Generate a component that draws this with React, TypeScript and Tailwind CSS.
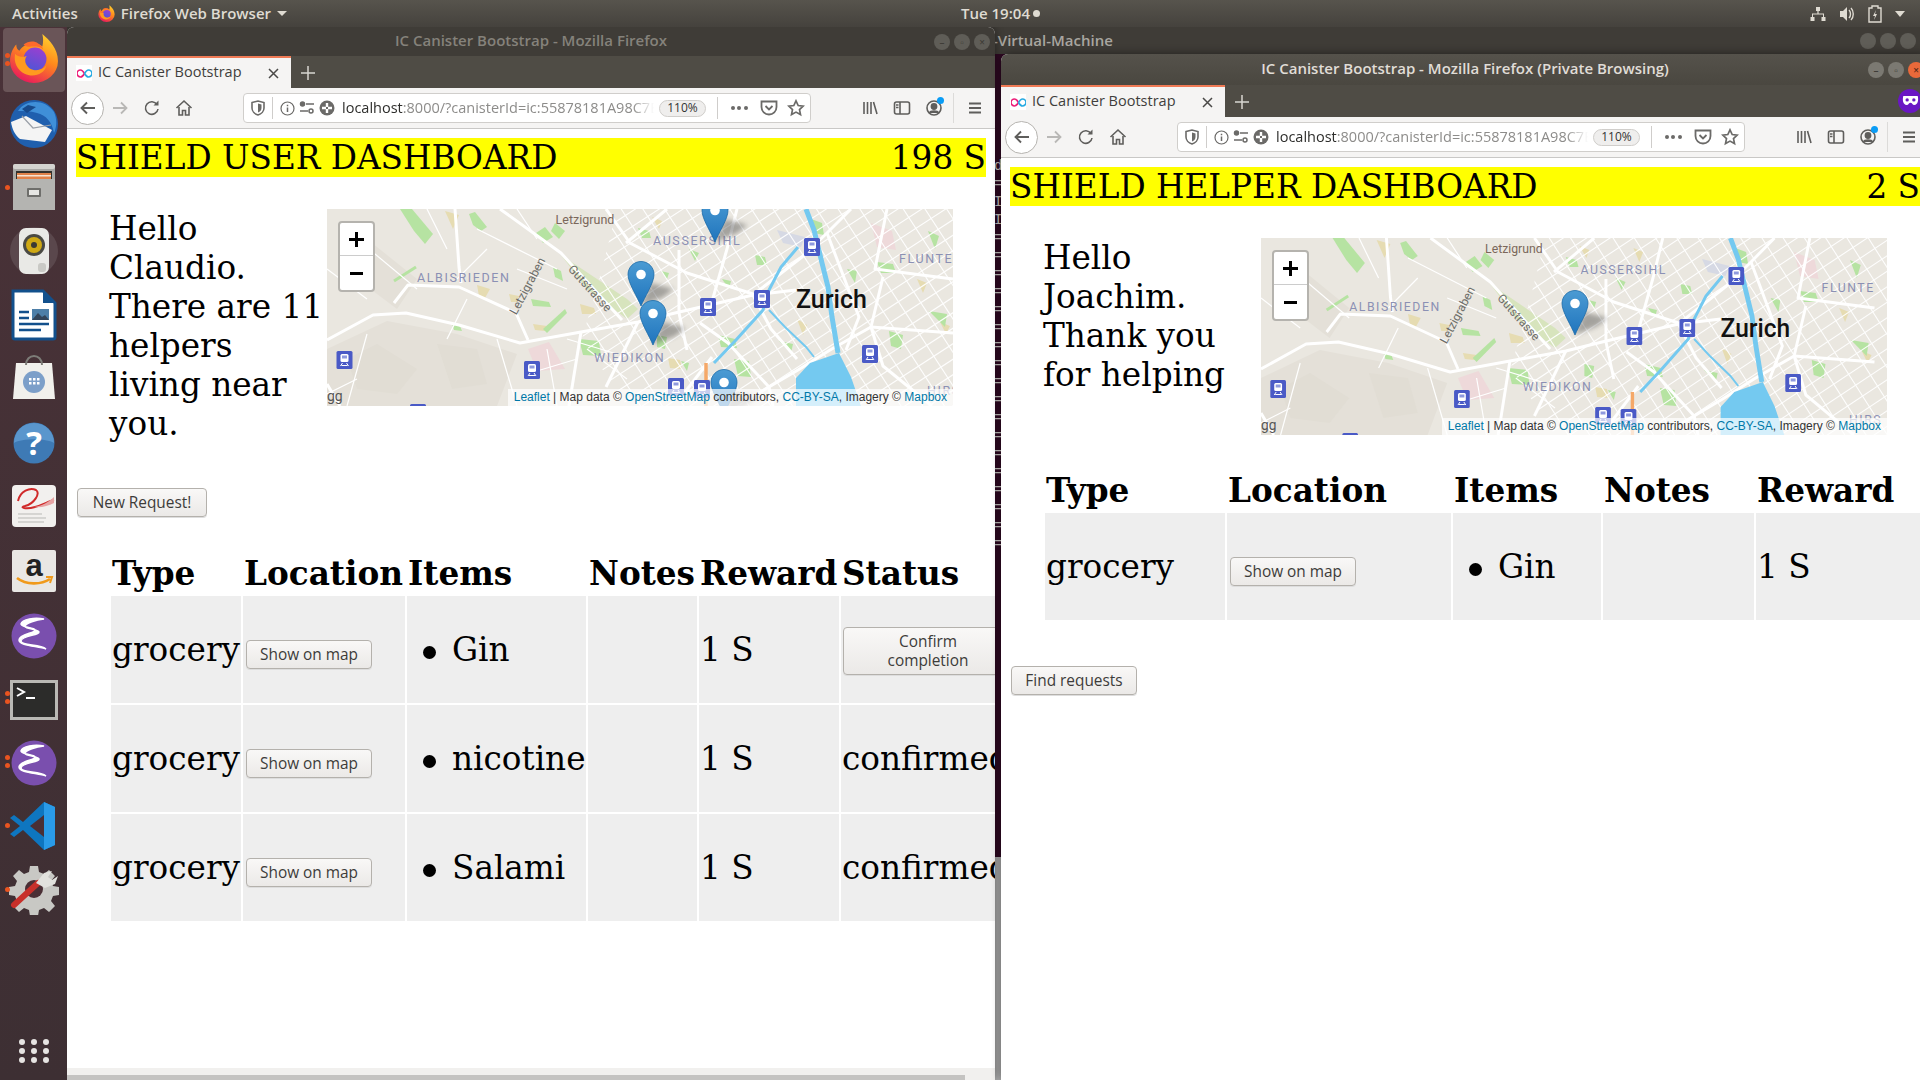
import type { ReactNode } from "react";

const UI = "font-['Open_Sans','Noto_Sans',sans-serif]";

function FirefoxIcon({ size }: { size: number }) {
  return (
    <svg width={size} height={size} viewBox="0 0 48 48">
      <defs>
        <linearGradient id="ffOuter" x1="0.8" y1="0" x2="0.3" y2="1">
          <stop offset="0" stopColor="#ffd22e" />
          <stop offset="0.45" stopColor="#ff8a1c" />
          <stop offset="1" stopColor="#e8175d" />
        </linearGradient>
        <linearGradient id="ffGlobe" x1="0.7" y1="0" x2="0.3" y2="1">
          <stop offset="0" stopColor="#9a3fd0" />
          <stop offset="1" stopColor="#4f55d6" />
        </linearGradient>
      </defs>
      <path d="M32 1c7 6 15 14 15 26a23 21 0 0 1-46 0c0-7 3-13 6-16 0 3 1 5 3 6 3-5 8-7 13-7 4 0 7 1 9 3 1-4 1-8 0-12z" fill="url(#ffOuter)" />
      <circle cx="25" cy="25" r="11" fill="url(#ffGlobe)" />
      <path d="M6 20c3 4 8 3 11 2-3 4-1 9 3 12 5 3 12 2 16-3-2 9-13 12-21 8C8 36 4 28 6 20z" fill="#ff9a1f" />
      <path d="M14 11c4-3 10-4 14-1 2 1 4 3 5 6-3-3-6-3-9-3-4 0-7 1-10-2z" fill="#ff6a2b" />
    </svg>
  );
}

function DockIcon({ children }: { children: ReactNode }) {
  return <svg width="52" height="52" viewBox="0 0 52 52">{children}</svg>;
}

const EmacsIcon = () => (
  <DockIcon>
    <circle cx="26" cy="26" r="22.5" fill="#7a4fae" />
    <path d="M36 9c-8 1-18 4-19 7s13 3 14 6-18 4-18 9 19 3 25 8c-8-3-27-3-27-9 0-6 17-7 16-10s-13-2-14-6C14 9 27 7 36 9z" fill="#fff" stroke="#fff" strokeWidth="1.5" />
  </DockIcon>
);

const dockIcons: { key: string; dots: number; nudge?: string; icon: ReactNode }[] = [
  {
    key: "firefox",
    dots: 2,
    nudge: "pb-[4px]",
    icon: <FirefoxIcon size={50} />,
  },
  {
    key: "thunderbird",
    dots: 0,
    icon: (
      <DockIcon>
        <circle cx="26" cy="26" r="24" fill="#1f5fae" />
        <path d="M10 13C17 2 36 0 46 14c3 7 3 14 0 21-2-11-8-18-17-20-7-2-13-2-19-2z" fill="#3f8fd8" />
        <path d="M3 24l15-6 26 14-7 12-25-3c-5-4-8-10-9-17z" fill="#f4f4f4" />
        <path d="M14 18l11 12 18-3" fill="none" stroke="#9aa0a8" strokeWidth="1.2" />
        <path d="M14 11l6-4 8 2-9 6z" fill="#174a8c" />
      </DockIcon>
    ),
  },
  {
    key: "files",
    dots: 1,
    icon: (
      <DockIcon>
        <rect x="5" y="3" width="42" height="46" rx="3" fill="#a9a9a6" />
        <rect x="5" y="3" width="42" height="5" rx="2" fill="#d4d4d0" />
        <rect x="8" y="10" width="36" height="8" fill="#33312d" />
        <rect x="9" y="12" width="34" height="6" fill="#e0824a" />
        <rect x="9" y="14" width="34" height="1.5" fill="#f5e3d4" />
        <rect x="5" y="18" width="42" height="31" fill="#b4b4b1" />
        <rect x="19" y="27" width="14" height="9" rx="1" fill="#6e6e6b" />
        <rect x="21" y="29" width="10" height="5" fill="#e6e6e3" />
      </DockIcon>
    ),
  },
  {
    key: "rhythmbox",
    dots: 0,
    icon: (
      <DockIcon>
        <circle cx="26" cy="26" r="24" fill="#5a474c" />
        <rect x="11" y="3" width="30" height="46" rx="7" fill="#e9e9e6" />
        <circle cx="26" cy="20" r="11" fill="#4a4a44" />
        <circle cx="26" cy="20" r="8" fill="#cfa915" />
        <circle cx="26" cy="20" r="3" fill="#3a3a34" />
        <rect x="30" y="38" width="8" height="9" rx="3" fill="#c9c9c5" />
      </DockIcon>
    ),
  },
  {
    key: "writer",
    dots: 0,
    icon: (
      <DockIcon>
        <path d="M5 2h30l12 12v34a2 2 0 0 1-2 2H7a2 2 0 0 1-2-2z" fill="#fff" stroke="#12508c" strokeWidth="3" />
        <path d="M35 2l12 12H35z" fill="#12508c" />
        <path d="M11 23h10M11 29h10M11 35h30M11 41h22" stroke="#12508c" strokeWidth="2.4" />
        <rect x="24" y="20" width="17" height="11" fill="#4d7fa8" />
        <path d="M24 31l6-7 4 4 3-2 4 5z" fill="#33455a" />
      </DockIcon>
    ),
  },
  {
    key: "software",
    dots: 0,
    nudge: "pb-[4px]",
    icon: (
      <DockIcon>
        <path d="M8 12h36l3 36H5z" fill="#f1f0ec" />
        <path d="M18 14c0-12 16-12 16 0" fill="none" stroke="#7d7d78" strokeWidth="2" />
        <ellipse cx="26" cy="31" rx="11" ry="11" fill="#7c9fc9" />
        <path d="M21 27h2.5v2.5H21zM25 27h2.5v2.5H25zM29 27h2.5v2.5H29zM21 31h2.5v2.5H21zM25 31h2.5v2.5H25zM29 31h2.5v2.5H29z" fill="#fff" />
      </DockIcon>
    ),
  },
  {
    key: "help",
    dots: 0,
    icon: (
      <DockIcon>
        <circle cx="26" cy="26" r="20.5" fill="#3e7ab5" />
        <path d="M6 26a20 20 0 0 1 40 0c-8-5-32-5-40 0z" fill="#5a96cd" />
        <text x="26" y="38" textAnchor="middle" fontSize="33" fontWeight="700" fill="#fff" fontFamily="Open Sans">?</text>
      </DockIcon>
    ),
  },
  {
    key: "evince",
    dots: 0,
    icon: (
      <DockIcon>
        <rect x="4" y="5" width="44" height="42" rx="4" fill="#f2f0ee" />
        <path d="M10 21c2-10 12-14 18-11 5 3-2 14-11 16-6 1 0 4 10 1 8-2 14-6 19-7" fill="none" stroke="#d02a2a" strokeWidth="2" />
        <path d="M26 27c8-1 15-5 20-10v6c-6 3-13 5-20 4z" fill="#e7a4a4" />
        <path d="M10 34h24M10 38h28M10 42h26" stroke="#b9b9b6" strokeWidth="1" />
      </DockIcon>
    ),
  },
  {
    key: "amazon",
    dots: 0,
    nudge: "pt-[2px]",
    icon: (
      <DockIcon>
        <rect x="4" y="5" width="44" height="42" rx="2" fill="#e9e7e4" />
        <text x="26" y="31" textAnchor="middle" fontSize="31" fontWeight="700" fill="#222" fontFamily="Liberation Sans">a</text>
        <path d="M9 33c9 7 24 7 33 1" fill="none" stroke="#f09a1c" strokeWidth="2.6" />
        <path d="M38 32l6 0-2 6" fill="none" stroke="#f09a1c" strokeWidth="2" />
      </DockIcon>
    ),
  },
  { key: "emacs1", dots: 0, nudge: "pt-[3px]", icon: <EmacsIcon /> },
  {
    key: "terminal",
    dots: 2,
    nudge: "pt-[4px]",
    icon: (
      <DockIcon>
        <rect x="2" y="6" width="48" height="40" fill="#b9b9b4" />
        <rect x="5" y="9" width="42" height="34" fill="#2c2c2a" />
        <path d="M9 14l7 4-7 4" fill="none" stroke="#fff" strokeWidth="2" />
        <path d="M18 24h9" stroke="#fff" strokeWidth="2" />
      </DockIcon>
    ),
  },
  { key: "emacs2", dots: 2, nudge: "pt-[2px]", icon: <EmacsIcon /> },
  {
    key: "vscode",
    dots: 1,
    nudge: "pt-[2px]",
    icon: (
      <DockIcon>
        <path d="M36 2l11 5v38l-11 5-21-20-9 7-4-3 10-8L2 18l4-3 9 7z" fill="#0e76c0" />
        <path d="M36 2l11 5v38l-11 5z" fill="#2a9be8" />
        <path d="M36 15v22l-14-11z" fill="#4a2f35" />
      </DockIcon>
    ),
  },
  {
    key: "tools",
    dots: 1,
    icon: (
      <DockIcon>
        <path d="M22 3h8l1 6 5 2 5-4 6 6-4 5 2 5 6 1v8l-6 1-2 5 4 5-6 6-5-4-5 2-1 6h-8l-1-6-5-2-5 4-6-6 4-5-2-5-6-1v-8l6-1 2-5-4-5 6-6 5 4 5-2z" fill="#c8c8c4" />
        <circle cx="26" cy="26" r="9" fill="#4a2f35" />
        <path d="M6 42l24-22" stroke="#c8302a" strokeWidth="6" strokeLinecap="round" />
        <path d="M28 20l8-10 8-2-4 6 4 3 6-4-3 8-10 4z" fill="#e2e2de" />
      </DockIcon>
    ),
  },
];

function Dock() {
  return (
    <div className="flex w-[67px] shrink-0 flex-col items-center bg-gradient-to-b from-[#4a3238] to-[#3d2f33] pt-px">
      <div className="flex flex-col">
        {dockIcons.map((item, i) => (
          <div
            key={item.key}
            className={`relative flex h-[63.8px] w-[62px] items-center justify-center rounded-[4px] ${i === 0 ? "bg-[#6a5558]" : ""} ${item.nudge ?? ""}`}
          >
            {item.dots > 0 && (
              <div className="absolute left-[2px] top-0 flex h-full flex-col justify-center gap-[3px]">
                {Array.from({ length: item.dots }).map((_, d) => (
                  <span key={d} className="h-[5px] w-[5px] rounded-full bg-[#e95420]" />
                ))}
              </div>
            )}
            {item.icon}
          </div>
        ))}
      </div>
      <div className="mt-auto mb-[17px] grid grid-cols-3 gap-x-[6px] gap-y-[3px]">
        {Array.from({ length: 9 }).map((_, i) => (
          <span key={i} className="h-[6px] w-[6px] rounded-full bg-[#e6e4e2]" />
        ))}
      </div>
    </div>
  );
}

function TopBar() {
  return (
    <div className={`relative flex h-[27px] shrink-0 items-center bg-gradient-to-b from-[#57544d] to-[#45423d] text-[15px] font-semibold text-[#dfdbd2] ${UI}`}>
      <span className="ml-[12px]">Activities</span>
      <span className="ml-[20px]"><FirefoxIcon size={17} /></span>
      <span className="ml-[6px]">Firefox Web Browser</span>
      <span className="ml-[6px] h-0 w-0 border-x-[5px] border-t-[5px] border-x-transparent border-t-[#dfdbd2]" />
      <span className="absolute left-[961px]">Tue 19:04</span>
      <span className="absolute left-[1033px] h-[7px] w-[7px] rounded-full bg-[#dfdbd2]" />
      <div className="ml-auto mr-[15px] flex items-center gap-[13px]">
        <svg width="16" height="16" viewBox="0 0 16 16" fill="#dfdbd2"><path d="M6 1h4v4H8.6v2.4H14V11h1.5v4h-4v-4H13V8.6H3V11h1.5v4h-4v-4H2V7.4h5.4V5H6z" /></svg>
        <svg width="16" height="16" viewBox="0 0 16 16" fill="#dfdbd2"><path d="M1 5h3l4-4v14l-4-4H1z" /><path d="M10 4c2 2 2 6 0 8M12 2c3 3 3 9 0 12" fill="none" stroke="#dfdbd2" strokeWidth="1.4" /></svg>
        <svg width="14" height="18" viewBox="0 0 14 18"><path d="M4 1h6v2h3v14H1V3h3z" fill="none" stroke="#dfdbd2" strokeWidth="1.4" /><path d="M8 5l-3 6h2l-1 4 3-6H7z" fill="#dfdbd2" /></svg>
        <span className="h-0 w-0 border-x-[5px] border-t-[6px] border-x-transparent border-t-[#dfdbd2]" />
      </div>
    </div>
  );
}

function ToolIcon({ children }: { children: ReactNode }) {
  return (
    <svg width="18" height="18" viewBox="0 0 18 18" fill="none" stroke="#5f5e5c" strokeWidth="1.6">
      {children}
    </svg>
  );
}

function UrlBar() {
  return (
    <div className={`ml-[43px] mr-[43px] flex h-[30px] w-[568px] shrink-0 items-center rounded-[4px] border border-[#d0cecb] bg-white ${UI}`}>
      <div className="flex w-[28px] justify-center">
        <svg width="14" height="16" viewBox="0 0 14 16"><path d="M1 2.5 7 1l6 1.5V8c0 3-2.5 6-6 7-3.5-1-6-4-6-7z" fill="none" stroke="#6b6a68" strokeWidth="1.6" /><path d="M7 3.500l3.500 1V8c0 2-1.300 3.600-3.500 4.400z" fill="#6b6a68" /></svg>
      </div>
      <div className="h-[22px] w-px bg-[#cfcdcb]" />
      <div className="ml-[4px] flex w-[20px] justify-center">
        <svg width="15" height="15" viewBox="0 0 15 15" fill="none" stroke="#6b6a68" strokeWidth="1.2"><circle cx="7.5" cy="7.5" r="6.5" /><path d="M7.5 6.5V11M7.5 3.8v1.4" strokeWidth="1.5" /></svg>
      </div>
      <div className="flex w-[20px] justify-center">
        <svg width="16" height="14" viewBox="0 0 16 14" fill="none" stroke="#6b6a68" strokeWidth="1.5"><circle cx="3.5" cy="3" r="2" fill="#6b6a68" /><path d="M7 3h8M1 10h8" /><circle cx="12" cy="10" r="2" /></svg>
      </div>
      <div className="flex w-[20px] justify-center">
        <svg width="16" height="16" viewBox="0 0 16 16"><circle cx="8" cy="8" r="7.5" fill="#6b6a68" /><path d="M8 3v4M8 9v4M3 8h4M9 8h4" stroke="#fff" strokeWidth="2.4" /></svg>
      </div>
      <div className="ml-[5px] w-[312px] overflow-hidden whitespace-nowrap text-[14.5px] text-[#8d8c8a] [mask-image:linear-gradient(to_right,black_93%,transparent)]">
        <span className="text-[#2e2e2c]">localhost</span>:8000/?canisterId=ic:55878181A98C7EA
      </div>
      <div className="ml-[5px] flex h-[17px] w-[47px] shrink-0 items-center justify-center rounded-full border border-[#d0cecb] bg-[#efeeed] text-[12px] text-[#333]">110%</div>
      <div className="ml-[11px] h-[22px] w-px bg-[#cfcdcb]" />
      <div className="flex w-[42px] justify-center gap-[2.5px]">
        <span className="h-[4px] w-[4px] rounded-full bg-[#6b6a68]" />
        <span className="h-[4px] w-[4px] rounded-full bg-[#6b6a68]" />
        <span className="h-[4px] w-[4px] rounded-full bg-[#6b6a68]" />
      </div>
      <svg width="18" height="16" viewBox="0 0 18 16" fill="none" stroke="#6b6a68" strokeWidth="1.8"><path d="M1.5 1.5h15V7a7.5 7.5 0 0 1-15 0z" /><path d="M5.5 6 9 9.5 12.500 6" /></svg>
      <svg className="ml-[9px]" width="18" height="18" viewBox="0 0 18 18" fill="none" stroke="#6b6a68" strokeWidth="1.7"><path d="M9 1.800l2.200 4.700 5 .6-3.700 3.500 1 5L9 13.100 4.500 15.600l1-5L1.800 7.100l5-.6z" /></svg>
    </div>
  );
}

function Toolbar() {
  return (
    <div className="flex h-[41px] shrink-0 items-center border-b border-[#c9c8c6] bg-[#f5f4f3]">
      <div className="ml-[4px] flex h-[33px] w-[33px] items-center justify-center rounded-full border border-[#b5b3af] bg-white">
        <ToolIcon><path d="M16 9H3M8 3.500 2.500 9 8 14.500" strokeWidth="1.9" /></ToolIcon>
      </div>
      <div className="flex w-[32px] justify-center">
        <svg width="18" height="18" viewBox="0 0 18 18" fill="none" stroke="#b9b8b6" strokeWidth="1.8"><path d="M2 9h13M10 3.500 15.500 9 10 14.500" /></svg>
      </div>
      <div className="flex w-[32px] justify-center">
        <ToolIcon><path d="M14 5.500A6.300 6.300 0 1 0 15 10" /><path d="M15.500 1.500V6.500H10.500z" fill="#5f5e5c" stroke="none" /></ToolIcon>
      </div>
      <div className="flex w-[32px] justify-center">
        <ToolIcon><path d="M1.500 9 9 2l7.500 7" /><path d="M4 8v8h3.500v-4.500h3V16H14V8" /></ToolIcon>
      </div>
      <UrlBar />
      <div className="flex w-[32px] justify-center">
        <ToolIcon><path d="M3 3v12M6.500 3v12M10 3v12M12.500 3l3.500 12" /></ToolIcon>
      </div>
      <div className="flex w-[32px] justify-center">
        <ToolIcon><rect x="1.500" y="3" width="15" height="12" rx="2" /><path d="M7 3v12M3 6h2.500M3 8.500h2.500" /></ToolIcon>
      </div>
      <div className="relative flex w-[32px] justify-center">
        <ToolIcon><circle cx="9" cy="9" r="7" /><circle cx="9" cy="7.500" r="2.600" fill="#5f5e5c" /><path d="M4.500 14c1-2.500 8-2.500 9 0" fill="#5f5e5c" /></ToolIcon>
        <span className="absolute left-[19px] top-[-2px] h-[7px] w-[7px] rounded-full bg-[#0a9cf5]" />
      </div>
      <div className="ml-[3px] h-[30px] w-px bg-[#dcdbd9]" />
      <div className="ml-[5px] flex w-[32px] justify-center">
        <ToolIcon><path d="M3 4.500h12M3 9h12M3 13.500h12" strokeWidth="1.9" /></ToolIcon>
      </div>
    </div>
  );
}

function MetroPin({ x, y }: { x: number; y: number }) {
  return (
    <g transform={`translate(${x - 8} ${y - 9})`}>
      <rect width="16" height="18" rx="1.500" fill="#4a5ac6" />
      <rect x="4" y="3" width="8" height="8" rx="1.500" fill="#fff" />
      <rect x="5.500" y="4.500" width="5" height="3" fill="#8f9ade" />
      <path d="M4 15l2-3M12 15l-2-3M5 14.500h6" stroke="#fff" strokeWidth="1" />
    </g>
  );
}

function Marker({ x, y }: { x: number; y: number }) {
  return (
    <g transform={`translate(${x - 13.500} ${y - 45})`}>
      <path d="M13 45 L23 22 L46 28 L36 36 Z" fill="#3a3a3a" opacity="0.4" filter="url(#mapBlur)" />
      <path d="M13.500.5C6.300.5.500 6.300.500 13.500.500 22 10 36 13.500 45 17 36 26.500 22 26.500 13.500 26.500 6.300 20.700.5 13.500.5z" fill="url(#pinFill)" stroke="#1c6ba8" strokeWidth="0.8" />
      <circle cx="13.500" cy="13.500" r="4.800" fill="#fff" />
    </g>
  );
}

const greens = [
  "73,0 85,0 106,25 98,35 87,22",
  "142,5 148,3 160,18 154,22 146,16",
  "209,24 218,18 226,28 216,34",
  "228,14 238,22 232,30 224,22",
  "311,19 322,22 324,29 315,29",
  "428,46 438,48 440,56 430,56",
  "484,10 495,14 497,26 487,24",
  "550,53 566,55 569,64 554,64",
  "226,58 234,62 236,72 228,68",
  "204,90 222,93 224,98 206,97",
  "216,120 238,100 240,104 220,124",
  "252,130 272,132 274,147 256,146",
  "125,115 133,117 135,122 127,121",
  "391,126 408,130 410,139 394,138",
  "407,150 422,152 424,168 411,167",
  "334,62 342,64 340,70",
  "452,132 466,135 464,144",
  "562,122 576,126 574,140 564,137",
  "601,22 612,27 608,40",
  "602,102 620,105 618,118",
  "354,152 362,154 360,162",
  "330,126 340,128 338,140 330,138",
  "395,70 404,72 402,80",
  "362,40 372,44 368,52",
  "520,60 530,62 528,74",
];

const sands = [
  "150,76 163,80 158,89 152,87",
  "182,85 192,87 190,93 184,93",
  "253,95 267,99 269,105 255,105",
  "341,149 353,151 355,160 343,159",
  "206,115 220,117 218,122 208,121",
  "613,113 623,117 619,125",
  "118,2 132,6 126,20",
  "470,110 480,116 476,126",
  "380,10 390,14 386,24",
  "325,8 335,12 332,20",
  "590,70 600,74 596,84",
];

const roads = [
  "173,0 205,23 234,44 295,111",
  "0,131 46,106 79,104 132,116 193,134 254,123 311,113 348,104 426,86 469,81",
  "67,94 81,76 132,78 189,104 201,131",
  "279,0 303,34 360,64 426,85",
  "128,0 132,58 134,74",
  "299,34 340,0",
  "426,86 475,48 500,24 524,0",
  "373,114 401,134 442,178 446,197",
  "385,148 352,191",
  "544,118 503,141 471,161 430,185",
  "556,68 544,118 556,157 605,197",
  "626,124 544,118",
  "500,24 532,108 519,141",
  "254,123 242,197",
  "311,113 279,178",
  "352,41 352,104 360,141",
  "0,175 13,197",
  "426,86 444,120 470,150",
  "560,0 548,60 626,70",
  "410,0 400,40 384,96",
];

const lanes = [
  "150,20 230,60", "190,60 240,80", "30,30 90,80", "0,60 40,90", "140,90 120,130",
  "170,130 190,197", "220,140 230,197", "200,165 250,150", "260,140 300,170", "210,30 190,0",
  "100,0 120,40", "160,40 130,70", "240,130 290,145", "0,185 30,170", "40,125 20,197",
];

// street grid of the built-up part of the city
const gridLines = Array.from({ length: 46 }, (_, i) => i * 13 - 100);

function MapBase() {
  return (
    <>
      <rect width="640" height="197" fill="#eae7e0" />
      <path d="M0 140 60 112 130 125 190 145 170 197H0zM40 30 90 70 70 100 30 70z" fill="#e4e0d8" />
      <path d="M20 150 50 135 90 160 70 185 30 180zM110 135 150 140 160 175 125 180z" fill="#e1ddd4" />
      <path d="M234 46 300 90 311 100 300 110 260 80z" fill="#d7e4bd" />
      <path d="M201 140 222 133 238 160 210 162z" fill="#eed9da" />
      <path d="M544 14 565 22 569 41 550 38z" fill="#eed9da" />
      <path d="M450 21 478 28 474 38 456 34z" fill="#d6d9e4" />
      {sands.map((p) => <polygon key={p} points={p} fill="#e6dcb2" />)}
      {greens.map((p) => <polygon key={p} points={p} fill="#b6e3a2" />)}
      <path d="M67 72 89 58" stroke="#b6e3a2" strokeWidth="3" />
      <g clipPath="url(#cityClip)" stroke="#fff" strokeWidth="1.100" opacity="0.95">
        <g transform="rotate(-33 450 100)">
          {gridLines.map((p) => <line key={`h${p}`} x1="150" x2="800" y1={p} y2={p} />)}
          {gridLines.map((p) => <line key={`v${p}`} x1={p * 1.4 + 350} x2={p * 1.4 + 350} y1="-250" y2="450" />)}
        </g>
      </g>
      {lanes.map((p) => <polyline key={p} points={p} fill="none" stroke="#fff" strokeWidth="1.200" />)}
      {roads.map((p) => <polyline key={p} points={p} fill="none" stroke="#fff" strokeWidth="3" strokeLinejoin="round" />)}
      <polygon points="469,169 483,154 512,144 524,168 534,197 469,197" fill="#74c9f0" />
      <polyline points="511,144 505,108 501,78 495,54 487,21 479,0" fill="none" stroke="#74c9f0" strokeWidth="5" />
      <polyline points="387,154 409,131 436,101 442,81 454,58 471,38" fill="none" stroke="#74c9f0" strokeWidth="3" />
      <polyline points="442,101 458,118 479,138 487,148" fill="none" stroke="#74c9f0" strokeWidth="2" />
      <path d="M379 154V197" stroke="#f5a868" strokeWidth="3.500" />
      {[
        [485, 38], [435, 90], [381, 98], [543, 145], [17.500, 151], [205, 161], [349, 178], [375, 180], [91, 204],
      ].map(([x, y]) => <MetroPin key={`${x}-${y}`} x={x} y={y} />)}
      <g fontFamily="Roboto, sans-serif" fontSize="12">
        <text x="258" y="15" textAnchor="middle" fill="#7b675b" fontSize="12.500">Letzigrund</text>
        <g fill="#8b90b4" letterSpacing="1.600" fontSize="12.500">
          <text x="326" y="36">AUSSERSIHL</text>
          <text x="90" y="73">ALBISRIEDEN</text>
          <text x="572" y="54">FLUNTE</text>
          <text x="267" y="153">WIEDIKON</text>
          <text x="600" y="186">HIRS</text>
        </g>
        <text transform="translate(204 79) rotate(-62)" textAnchor="middle" fill="#6e6e6a">Letzigraben</text>
        <text transform="translate(260 82) rotate(48)" textAnchor="middle" fill="#6e6e6a">Gutstrasse</text>
        <text x="469" y="99" fill="#111" fontSize="25" fontWeight="500">Zurich</text>
        <text x="0" y="192" fill="#555" fontSize="14">gg</text>
      </g>
    </>
  );
}

function LeafletMap({ markers, squeeze }: { markers: [number, number][]; squeeze: number }) {
  return (
    <div className="relative h-[197px] w-[626px] shrink-0 overflow-hidden">
      <svg width="626" height="197" viewBox="0 0 626 197" className="block">
        <defs>
          <linearGradient id="pinFill" x1="0" y1="0" x2="0" y2="1">
            <stop offset="0" stopColor="#4b9bd3" />
            <stop offset="1" stopColor="#1f74bd" />
          </linearGradient>
          <filter id="mapBlur"><feGaussianBlur stdDeviation="2.500" /></filter>
          <clipPath id="cityClip"><polygon points="290,0 640,0 640,197 300,197 255,130 275,60" /></clipPath>
        </defs>
        <g transform={`scale(${squeeze} 1)`}>
          <MapBase />
        </g>
        {markers.map(([x, y]) => <Marker key={`${x}-${y}`} x={x} y={y} />)}
      </svg>
      <div className="absolute left-[11px] top-[12px] flex w-[37px] flex-col rounded-[4px] border-2 border-[#b5b3ae] bg-white">
        <div className="flex h-[33px] items-center justify-center border-b border-[#ccc]">
          <svg width="15" height="15" viewBox="0 0 15 15"><path d="M6 0h3v6h6v3H9v6H6V9H0V6h6z" /></svg>
        </div>
        <div className="flex h-[34px] items-center justify-center">
          <svg width="13" height="3" viewBox="0 0 13 3"><rect width="13" height="3" /></svg>
        </div>
      </div>
      <div className="absolute bottom-0 right-0 whitespace-nowrap bg-white/70 px-[6px] font-['Liberation_Sans',sans-serif] text-[12px] leading-[17px] text-[#333]">
        <span className="text-[#0078a8]">Leaflet</span> | Map data © <span className="text-[#0078a8]">OpenStreetMap</span> contributors, <span className="text-[#0078a8]">CC-BY-SA</span>, Imagery © <span className="text-[#0078a8]">Mapbox</span>
      </div>
    </div>
  );
}

function GrayButton({ children, className = "" }: { children: ReactNode; className?: string }) {
  return (
    <button
      type="button"
      className={`rounded-[4px] border border-[#b4b1ac] bg-gradient-to-b from-[#f9f8f7] to-[#ebe9e7] text-center text-[15.4px] leading-[19px] text-[#3d3c3a] shadow-[0_1px_0_#ddd] ${UI} ${className}`}
    >
      {children}
    </button>
  );
}

function ShowOnMap() {
  return <GrayButton className="ml-[2px] mt-[8px] block h-[29px] w-[126px]">Show on map</GrayButton>;
}

function Item({ name }: { name: string }) {
  return (
    <ul>
      <li className="flex items-center">
        <span className="ml-[15px] mr-[16px] mt-[3px] h-[13px] w-[13px] shrink-0 rounded-full bg-black" />
        {name}
      </li>
    </ul>
  );
}

function Browser({
  title,
  active,
  className,
  titleClass,
  children,
}: {
  title: string;
  active: boolean;
  className: string;
  titleClass: string;
  children: ReactNode;
}) {
  const ctrl = active ? "bg-[#7b7972] text-[#3f3d38]" : "bg-[#5f5d57] text-[#3f3d38]";
  return (
    <div className={`absolute flex w-[928px] flex-col overflow-hidden rounded-t-[7px] bg-white shadow-[0_0_10px_rgba(0,0,0,0.45)] ${className}`}>
      <div className={`relative flex shrink-0 items-center justify-center pb-[2px] text-[15px] font-semibold ${UI} ${titleClass} ${active ? "text-[#e0ddd7]" : "text-[#85827b]"}`}>
        {title}
        <div className="absolute right-[5px] top-1/2 flex -translate-y-1/2 gap-[4px]">
          <span className={`flex h-[16px] w-[16px] items-center justify-center rounded-full text-[10px] leading-none ${ctrl}`}>–</span>
          <span className={`flex h-[16px] w-[16px] items-center justify-center rounded-full text-[10px] leading-none ${ctrl}`}>▫</span>
          <span className={`flex h-[16px] w-[16px] items-center justify-center rounded-full text-[10px] leading-none ${active ? "bg-[#e9693a] text-[#5a2a18]" : ctrl}`}>×</span>
        </div>
      </div>
      <div className={`relative flex h-[32px] shrink-0 items-end bg-[#4f4c45] ${UI}`}>
        <div className="flex h-[32px] w-[224px] items-center border-t-2 border-[#ef7a55] bg-[#f5f4f3]">
          <span className="ml-[9px] flex h-[16px] w-[16px] items-center justify-center bg-white">
            <svg width="15" height="9" viewBox="0 0 15 9" fill="none" strokeWidth="1.700">
              <path d="M7.500 4.500C6 2 5 1 3.500 1a3.500 3.500 0 0 0 0 7C5 8 6 7 7.500 4.500" stroke="#ed1e79" />
              <path d="M7.500 4.500C9 2 10 1 11.500 1a3.500 3.500 0 0 1 0 7C10 8 9 7 7.500 4.500" stroke="#29abe2" />
            </svg>
          </span>
          <span className="ml-[6px] pb-[2px] text-[14.5px] text-[#3f3e3c]">IC Canister Bootstrap</span>
          <svg className="ml-auto mr-[12px]" width="11" height="11" viewBox="0 0 11 11" stroke="#4a4947" strokeWidth="1.500"><path d="M1 1l9 9M10 1l-9 9" /></svg>
        </div>
        <svg className="ml-[10px] mb-[8px]" width="14" height="14" viewBox="0 0 14 14" stroke="#d8d6d1" strokeWidth="1.500"><path d="M7 0v14M0 7h14" /></svg>
        {active && (
          <span className="absolute left-[897px] top-[4px] flex h-[24px] w-[24px] items-center justify-center rounded-full bg-[#6a16c4]">
            <svg width="17" height="10" viewBox="0 0 15 9"><path d="M1 0h13c1 4 0 8-3 8-2 0-2-2-3.500-2S6 8 4 8C1 8 0 4 1 0z" fill="#fff" /><circle cx="4.500" cy="3.500" r="1.500" fill="#6a16c4" /><circle cx="10.500" cy="3.500" r="1.500" fill="#6a16c4" /></svg>
          </span>
        )}
      </div>
      <Toolbar />
      <div className="relative flex-1 overflow-hidden bg-white font-['DejaVu_Serif',serif] text-[32.7px] leading-[39px] text-black">
        {children}
      </div>
    </div>
  );
}

function Heading({ title, balance }: { title: string; balance: string }) {
  return (
    <div className="mx-[9px] mt-[9px] flex h-[39px] justify-between overflow-hidden whitespace-nowrap bg-[#ffff00] pt-px">
      <span>{title}</span>
      <span>{balance}</span>
    </div>
  );
}

const cell = "bg-[#eeeeee] px-px pt-[3px] pb-px";

function UserPage() {
  return (
    <>
      <Heading title="SHIELD USER DASHBOARD" balance="198 S" />
      <div className="ml-[42px] mt-[32px] flex">
        <p className="w-[218px] shrink-0 pt-px">Hello Claudio. There are 11 helpers living near you.</p>
        <LeafletMap squeeze={1} markers={[[388, 33], [314, 97], [326, 136], [397, 205]]} />
      </div>
      <GrayButton className="ml-[10px] mt-[44px] block h-[29px] w-[130px]">New Request!</GrayButton>
      <table className="ml-[42px] mt-[34px] w-[909px] table-fixed border-separate border-spacing-[2px] text-left">
        <colgroup>
          <col className="w-[130px]" />
          <col className="w-[162px]" />
          <col className="w-[179px]" />
          <col className="w-[109px]" />
          <col className="w-[140px]" />
          <col className="w-[175px]" />
        </colgroup>
        <thead>
          <tr className="h-[41px]">
            {["Type", "Location", "Items", "Notes", "Reward", "Status"].map((h) => (
              <th key={h} className="whitespace-nowrap p-px font-bold">{h}</th>
            ))}
          </tr>
        </thead>
        <tbody>
          <tr className="h-[107px]">
            <td className={cell}>grocery</td>
            <td className={cell}><ShowOnMap /></td>
            <td className={cell}><Item name="Gin" /></td>
            <td className={cell} />
            <td className={cell}>1 S</td>
            <td className={cell}>
              <GrayButton className="ml-[1px] block h-[48px] w-[170px] px-[30px]">Confirm completion</GrayButton>
            </td>
          </tr>
          {["nicotine", "Salami"].map((r) => (
            <tr key={r} className="h-[107px]">
              <td className={cell}>grocery</td>
              <td className={cell}><ShowOnMap /></td>
              <td className={cell}><Item name={r} /></td>
              <td className={cell} />
              <td className={cell}>1 S</td>
              <td className={`${cell} overflow-hidden whitespace-nowrap`}>confirmed</td>
            </tr>
          ))}
        </tbody>
      </table>
      <div className="absolute bottom-0 left-0 h-[12px] w-full bg-[#f1f0ee]">
        <div className="absolute bottom-0 left-0 h-[5px] w-[898px] bg-[#c4c3c1]" />
      </div>
    </>
  );
}

function HelperPage() {
  return (
    <>
      <Heading title="SHIELD HELPER DASHBOARD" balance="2 S" />
      <div className="ml-[42px] mt-[32px] flex">
        <p className="w-[218px] shrink-0 pt-px">Hello Joachim. Thank you for helping</p>
        <LeafletMap squeeze={0.98} markers={[[314, 97]]} />
      </div>
      <table className="ml-[42px] mt-[33px] w-[881px] table-fixed border-separate border-spacing-[2px] text-left">
        <colgroup>
          <col className="w-[180px]" />
          <col className="w-[224px]" />
          <col className="w-[148px]" />
          <col className="w-[151px]" />
          <col className="w-[166px]" />
        </colgroup>
        <thead>
          <tr className="h-[41px]">
            {["Type", "Location", "Items", "Notes", "Reward"].map((h) => (
              <th key={h} className="whitespace-nowrap p-px font-bold">{h}</th>
            ))}
          </tr>
        </thead>
        <tbody>
          <tr className="h-[107px]">
            <td className={cell}>grocery</td>
            <td className={cell}><ShowOnMap /></td>
            <td className={cell}><Item name="Gin" /></td>
            <td className={cell} />
            <td className={cell}>1 S</td>
          </tr>
        </tbody>
      </table>
      <GrayButton className="ml-[10px] mt-[44px] block h-[29px] w-[126px]">Find requests</GrayButton>
    </>
  );
}

export default function App() {
  return (
    <div className="flex h-[1080px] w-[1920px] flex-col overflow-hidden bg-[#300a24]">
      <TopBar />
      <div className="flex min-h-0 flex-1">
        <Dock />
        <div className="relative flex-1 overflow-hidden">
          {/* window behind the two browsers */}
          <div className={`flex h-[27px] items-center bg-[#3f3c37] text-[15px] font-semibold text-[#a9a6a0] ${UI}`}>
            <span className="ml-[926px]">-Virtual-Machine</span>
            <div className="ml-auto mr-[4px] flex gap-[4px]">
              <span className="h-[16px] w-[16px] rounded-full bg-[#5f5d57]" />
              <span className="h-[16px] w-[16px] rounded-full bg-[#5f5d57]" />
              <span className="h-[16px] w-[16px] rounded-full bg-[#5f5d57]" />
            </div>
          </div>
          <div className="absolute left-[927px] top-[130px] w-[8px] overflow-hidden font-['Liberation_Mono',monospace] text-[14px] leading-[18px] text-[#d8d4d0]">
            {["d", "=", "I", "I", "=", "=", "=", "=", "=", "=", "=", "=", "=", "=", "=", "=", "=", "=", "=", "=", "=", "="].map((c, i) => (
              <div key={i}>{c}</div>
            ))}
          </div>
          <div className="absolute left-[927px] top-[830px] h-[223px] w-[8px] bg-[#b3b3b3]" />
          <Browser
            title="IC Canister Bootstrap - Mozilla Firefox"
            active={false}
            className="left-0 top-0 h-[1053px]"
            titleClass="h-[29px] bg-[#3f3c37]"
          >
            <UserPage />
          </Browser>
          <Browser
            title="IC Canister Bootstrap - Mozilla Firefox (Private Browsing)"
            active
            className="left-[934px] top-[27px] h-[1026px]"
            titleClass="h-[31px] bg-gradient-to-b from-[#55524b] to-[#4a4740]"
          >
            <HelperPage />
          </Browser>
        </div>
      </div>
    </div>
  );
}
